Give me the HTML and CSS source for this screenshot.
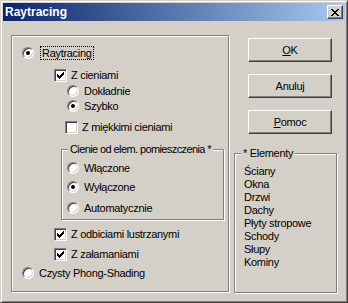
FILE: index.html
```html
<!DOCTYPE html>
<html lang="pl">
<head>
    <meta charset="UTF-8">
    <title>Raytracing</title>
    <link rel="stylesheet" href="styles.css">
</head>
<body>
    <div class="window">
        <div class="titlebar">
            <span class="title">Raytracing</span>
            <span class="close">
                <svg width="8" height="7" viewBox="0 0 8 7" shape-rendering="crispEdges"><path d="M0 0h2v1h-2zM6 0h2v1h-2zM1 1h2v1h-2zM5 1h2v1h-2zM2 2h4v1h-4zM3 3h2v1h-2zM2 4h4v1h-4zM1 5h2v1h-2zM5 5h2v1h-2zM0 6h2v1h-2zM6 6h2v1h-2z" fill="#000"/></svg>
            </span>
        </div>
        <div class="content">
            <div class="group main-group">
                <div class="row r-ray"><span class="radio on"></span><span class="label focus">Raytracing</span></div>
                <div class="row r-shadow"><span class="check"><svg width="11" height="11" viewBox="1 1 11 11" shape-rendering="crispEdges"><path d="M3 5h1v3h-1zM4 6h1v3h-1zM5 7h1v3h-1zM6 6h1v3h-1zM7 5h1v3h-1zM8 4h1v3h-1zM9 3h1v3h-1z" fill="#000"/></svg></span><span class="label">Z cieniami</span></div>
                <div class="row r-exact"><span class="radio"></span><span class="label">Dokładnie</span></div>
                <div class="row r-fast"><span class="radio on"></span><span class="label">Szybko</span></div>
                <div class="row r-soft"><span class="check"></span><span class="label">Z miękkimi cieniami</span></div>
                <div class="group room-group">
                    <div class="legend tight"><span>Cienie od elem. pomieszczenia *</span></div>
                    <div class="row r-on"><span class="radio"></span><span class="label">Włączone</span></div>
                    <div class="row r-off"><span class="radio on"></span><span class="label">Wyłączone</span></div>
                    <div class="row r-auto"><span class="radio"></span><span class="label">Automatycznie</span></div>
                </div>
                <div class="row r-refl"><span class="check"><svg width="11" height="11" viewBox="1 1 11 11" shape-rendering="crispEdges"><path d="M3 5h1v3h-1zM4 6h1v3h-1zM5 7h1v3h-1zM6 6h1v3h-1zM7 5h1v3h-1zM8 4h1v3h-1zM9 3h1v3h-1z" fill="#000"/></svg></span><span class="label">Z odbiciami lustrzanymi</span></div>
                <div class="row r-refr"><span class="check"><svg width="11" height="11" viewBox="1 1 11 11" shape-rendering="crispEdges"><path d="M3 5h1v3h-1zM4 6h1v3h-1zM5 7h1v3h-1zM6 6h1v3h-1zM7 5h1v3h-1zM8 4h1v3h-1zM9 3h1v3h-1z" fill="#000"/></svg></span><span class="label">Z załamaniami</span></div>
                <div class="row r-phong"><span class="radio"></span><span class="label">Czysty Phong-Shading</span></div>
            </div>
            <div class="side">
                <button class="button"><span><u>O</u>K</span></button>
                <button class="button">Anuluj</button>
                <button class="button"><span><u>P</u>omoc</span></button>
                <div class="group elements-group">
                    <div class="legend"><span>* Elementy</span></div>
                    <div class="elements">
                        <div>Ściany</div>
                        <div>Okna</div>
                        <div>Drzwi</div>
                        <div>Dachy</div>
                        <div>Płyty stropowe</div>
                        <div>Schody</div>
                        <div>Słupy</div>
                        <div>Kominy</div>
                    </div>
                </div>
            </div>
        </div>
    </div>
</body>
</html>
```

FILE: styles.css
```css
body {
    margin: 0;
    font-family: "Liberation Sans", Arial, sans-serif;
    font-size: 11px;
    letter-spacing: -0.3px;
    color: #000;
}
.window {
    width: 348px;
    height: 303px;
    box-sizing: border-box;
    background-color: #d4d0c8;
    border: 1px solid;
    border-color: #d4d0c8 #404040 #404040 #d4d0c8;
    box-shadow: inset 1px 1px #fff, inset -1px -1px #808080;
    padding: 2px;
}
.titlebar {
    height: 18px;
    display: flex;
    align-items: center;
    justify-content: space-between;
    padding: 0 2px;
    background: linear-gradient(to right, #0a246a, #a6caf0);
    color: #fff;
}
.title {
    font-weight: bold;
    font-size: 12px;
    letter-spacing: 0;
}
.close {
    width: 16px;
    height: 14px;
    box-sizing: border-box;
    display: flex;
    align-items: center;
    justify-content: center;
    background-color: #d4d0c8;
    border: 1px solid;
    border-color: #fff #404040 #404040 #fff;
    box-shadow: inset -1px -1px #808080;
}
.content {
    display: flex;
    align-items: flex-start;
    padding: 14px 0 0 8px;
}
.group {
    box-sizing: border-box;
    border: 1px solid #808080;
    box-shadow: inset 1px 1px #fff, 1px 1px #fff;
}
.main-group {
    width: 218px;
    padding-bottom: 11px;
}
.legend {
    height: 14px;
    line-height: 14px;
    margin-top: -8px;
    white-space: nowrap;
}
.legend span {
    background-color: #d4d0c8;
    margin-left: 6px;
    padding: 0 2px;
}
.legend.tight {
    letter-spacing: -0.6px;
}
.row {
    display: flex;
    align-items: center;
    height: 14px;
    line-height: 14px;
    white-space: nowrap;
}
.radio {
    flex: none;
    width: 12px;
    height: 12px;
    box-sizing: border-box;
    border-radius: 50%;
    border: 1px solid;
    border-color: #808080 #fff #fff #808080;
    box-shadow: inset 1px 1px #404040, inset -1px -1px #d4d0c8;
    background-color: #fff;
    display: flex;
    align-items: center;
    justify-content: center;
    margin-right: 5px;
}
.radio.on::after {
    content: "";
    width: 4px;
    height: 4px;
    border-radius: 50%;
    background-color: #000;
}
.check {
    flex: none;
    width: 13px;
    height: 13px;
    box-sizing: border-box;
    border: 1px solid;
    border-color: #808080 #fff #fff #808080;
    box-shadow: inset 1px 1px #404040, inset -1px -1px #d4d0c8;
    background-color: #fff;
    margin-right: 4px;
}
.check svg {
    display: block;
}
.focus {
    margin-left: 1px;
    padding: 0 1px;
    border: 1px dotted #000;
    line-height: 12px;
}
.r-ray { margin: 10px 0 0 10px; }
.r-shadow { margin: 8px 0 0 42px; }
.r-exact { margin: 2px 0 0 55px; }
.r-fast { margin: 1px 0 0 55px; }
.r-soft { margin: 7px 0 0 53px; }
.room-group {
    width: 163px;
    margin: 15px 0 0 49px;
    padding-bottom: 4px;
}
.r-on { margin: 5px 0 0 5px; }
.r-off { margin: 5px 0 0 5px; }
.r-auto { margin: 7px 0 0 5px; }
.r-refl { margin: 7px 0 0 42px; }
.r-refr { margin: 6px 0 0 42px; }
.r-phong { margin: 5px 0 0 10px; }
.side {
    display: flex;
    flex-direction: column;
    margin-left: 5px;
}
.button {
    width: 84px;
    height: 24px;
    box-sizing: border-box;
    margin: 12px 0 0 14px;
    padding: 0;
    font: inherit;
    letter-spacing: inherit;
    color: #000;
    background-color: #d4d0c8;
    border: 1px solid;
    border-color: #fff #404040 #404040 #fff;
    box-shadow: inset -1px -1px #808080;
}
.button:first-child {
    margin-top: 3px;
}
.elements-group {
    width: 103px;
    height: 140px;
    margin-top: 19px;
}
.elements {
    margin: 5px 0 0 9px;
    line-height: 13px;
}
```
